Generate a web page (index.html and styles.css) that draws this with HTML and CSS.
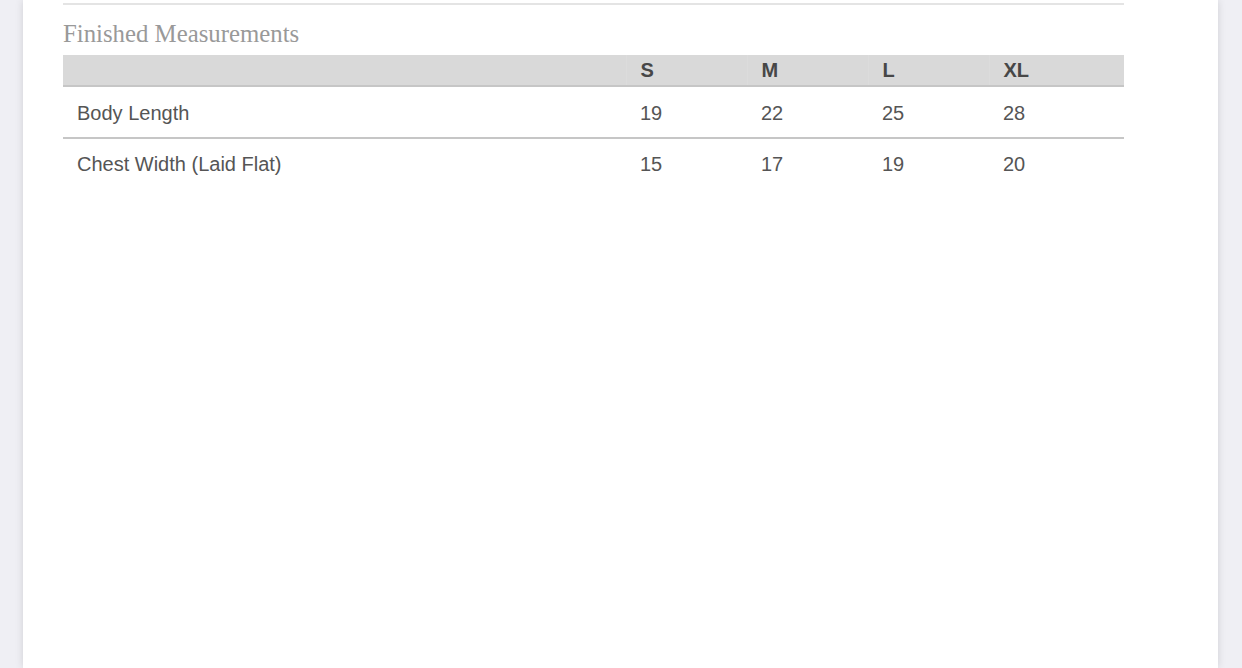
FILE: index.html
```html
<!DOCTYPE html>
<html lang="en">
<head>
  <meta charset="UTF-8" />
  <meta name="viewport" content="width=device-width, initial-scale=1.0" />
  <title>Finished Measurements</title>
  <link rel="stylesheet" href="styles.css">
</head>
<body>
  <div class="page">
    <div class="panel">
      <hr class="rule">
      <h2 class="section-title">Finished Measurements</h2>

      <table class="size-chart">
        <colgroup>
          <col class="col-label">
          <col class="col-size">
          <col class="col-size">
          <col class="col-size">
          <col>
        </colgroup>
        <thead>
          <tr>
            <th></th>
            <th>S</th>
            <th>M</th>
            <th>L</th>
            <th>XL</th>
          </tr>
        </thead>
        <tbody>
          <tr>
            <td>Body Length</td>
            <td>19</td>
            <td>22</td>
            <td>25</td>
            <td>28</td>
          </tr>
          <tr>
            <td>Chest Width (Laid Flat)</td>
            <td>15</td>
            <td>17</td>
            <td>19</td>
            <td>20</td>
          </tr>
        </tbody>
      </table>
    </div>
  </div>
</body>
</html>
```

FILE: styles.css
```css
:root {
  --bg: #efeff4;
  --panel: #ffffff;
  --head: #d9d9d9;
  --line: #c6c6c6;
  --text: #555555;
}

body {
  margin: 0;
  background: var(--bg);
  font-family: 'Liberation Sans', Arial, sans-serif;
  color: var(--text);
  height: 668px;
  overflow: hidden;
}

.page {
  padding-left: 23px;
  height: 100%;
}

.panel {
  width: 1195px;
  height: 100%;
  box-sizing: border-box;
  background: var(--panel);
  box-shadow: 0 0 8px rgba(0, 0, 0, 0.13);
  padding: 3px 94px 0 40px;
}

.rule {
  margin: 0;
  border: none;
  border-top: 2px solid #e4e4e4;
}

.section-title {
  margin: 0;
  padding: 14px 0 6px;
  font-family: 'Liberation Serif', 'Times New Roman', serif;
  font-weight: normal;
  font-size: 24.8px;
  line-height: 30px;
  color: #999999;
}

.size-chart {
  width: 1061px;
  border-collapse: collapse;
  table-layout: fixed;
  font-size: 20px;
}

.col-label {
  width: 563px;
}

.col-size {
  width: 121px;
}

.size-chart th {
  background: var(--head);
  color: #474747;
  font-weight: bold;
  text-align: left;
  height: 30px;
  padding: 0 14px;
  border-bottom: 2px solid var(--line);
  border-left: 1px solid #dcdcdc;
}

.size-chart th:first-child {
  border-left: none;
}

.size-chart td {
  height: 50px;
  padding: 0 14px;
  text-align: left;
}

.size-chart tbody tr:first-child td {
  height: 48px;
  padding-top: 2px;
  border-bottom: 2px solid var(--line);
}
```
